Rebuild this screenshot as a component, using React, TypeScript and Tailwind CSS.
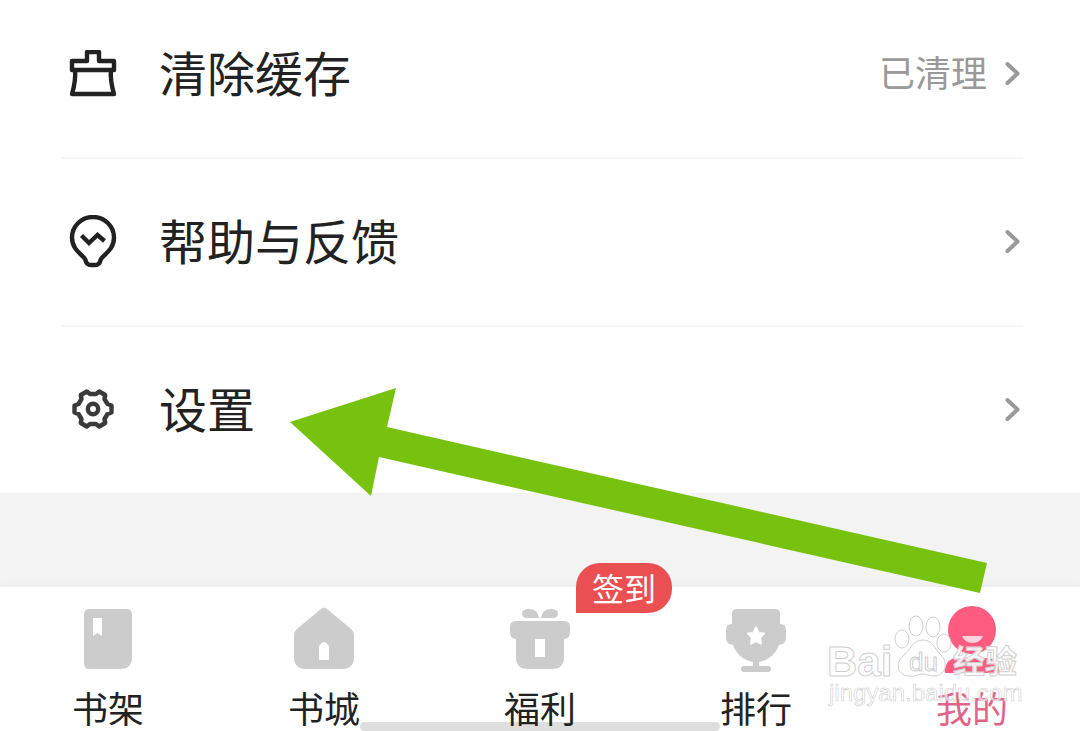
import { ReactNode } from 'react';

interface MenuItem {
  label: string;
  icon: ReactNode;
  value?: string;
}

interface TabItem {
  label: string;
  icon: ReactNode;
  badge?: string;
  active?: boolean;
}

const BrushIcon = () => (
  <svg width="48" height="48" viewBox="0 0 48 48" fill="none" stroke="#222222" strokeWidth="4.4" strokeLinejoin="round">
    <path d="M18 2H30V11H45V20H3V11H18Z" />
    <path d="M6 20C7 29 5 37 3 44H45C43 37 41 29 42 20" />
  </svg>
);

const BulbIcon = () => (
  <svg width="48" height="54" viewBox="0 0 48 54" fill="none" stroke="#222222" strokeWidth="4.4" strokeLinejoin="round">
    <path d="M16.5 45C15 40 3 36 3 22.5A21 20.5 0 0 1 45 22.5C45 36 33 40 31.5 45C31 49 29 50 26 50H22C19 50 17 49 16.5 45Z" />
    <path d="M12.5 20.5L20 28L28.5 20L35.5 26" strokeLinejoin="miter" />
  </svg>
);

const GearIcon = () => (
  <svg width="48" height="48" viewBox="0 0 48 48" fill="none" stroke="#3a3a3a" strokeWidth="4.4" strokeLinejoin="round">
    <path d="M42.5 19.5V26.5L38.5 28L35.5 33L36.2 37L30.2 40.5L27 38H21L17.8 40.5L11.8 37L12.5 33L9.5 28L5.5 26.5V19.5L9.5 18L12.5 13L11.8 9L17.8 5.5L21 8H27L30.2 5.5L36.2 9L35.5 13L38.5 18Z" />
    <circle cx="24" cy="23" r="5.2" />
  </svg>
);

const ChevronIcon = () => (
  <svg width="16" height="24" viewBox="0 0 16 24" className="overflow-visible" fill="none" stroke="#999999" strokeWidth="4" strokeLinecap="round" strokeLinejoin="round">
    <path d="M4.5 2L14.5 11.5L4.5 21" />
  </svg>
);

const ShelfIcon = () => (
  <svg width="60" height="60" viewBox="0 0 60 60">
    <path d="M11 0H49Q54 0 54 6V48Q54 60 42 60H11Q6 60 6 54V6Q6 0 11 0Z" fill="#cccccc" />
    <path d="M15 9H24V27L19.5 24L15 27Z" fill="#ffffff" />
  </svg>
);

const HouseIcon = () => (
  <svg width="60" height="60" viewBox="0 0 60 60" className="overflow-visible">
    <path d="M27 0Q30 -2.500 33 0L57 20Q60 22.500 60 27V48Q60 60 48 60H12Q0 60 0 48V27Q0 22.500 3 20Z" fill="#cccccc" />
    <path d="M25 51V37.500Q30 28.500 35 37.500V51Z" fill="#ffffff" />
  </svg>
);

const GiftIcon = () => (
  <svg width="60" height="60" viewBox="0 0 60 60" fill="#cccccc">
    <path d="M29 9Q28 0 19 0Q12 0 12 4.500Q12 9 18 9ZM31 9Q32 0 41 0Q48 0 48 4.500Q48 9 42 9Z" />
    <path d="M6 12H54Q60 12 60 18V23Q60 30 54 30V48Q54 60 42 60H18Q6 60 6 48V30Q0 30 0 23V18Q0 12 6 12Z" />
    <path d="M25 30H35V48H25Z" fill="#ffffff" />
  </svg>
);

const TrophyIcon = () => (
  <svg width="60" height="60" viewBox="0 0 60 60" className="overflow-visible" fill="#cccccc">
    <path d="M11 0H49Q54 0 54 5V15Q60 15 60 21V29Q60 35 53 36Q48 50 33 53V57H42Q45 57 45 60Q45 63 42 63H18Q15 63 15 60Q15 57 18 57H27V53Q12 50 7 36Q0 35 0 29V21Q0 15 6 15V5Q6 0 11 0Z" />
    <path
      d="M30 18.500L32.500 24L38 24.500L34 28.500L35 34.500L30 32L25 34.500L26 28.500L22 24.500L27.500 24Z"
      fill="#ffffff"
      stroke="#ffffff"
      strokeWidth="2"
      strokeLinejoin="round"
    />
  </svg>
);

const ProfileIcon = () => (
  <svg width="60" height="60" viewBox="0 0 60 60" className="overflow-visible">
    <path d="M4 64Q2 64 3 60Q5 49 15 49H45Q55 49 57 60Q58 64 56 64Z" fill="#fd5b80" />
    <circle cx="30" cy="21" r="24" fill="#fd5b80" />
    <path d="M20 27H41Q38 34 30.500 34Q23 34 20 27Z" fill="#ffd3dd" />
  </svg>
);

const menuItems: MenuItem[] = [
  { label: '清除缓存', icon: <BrushIcon />, value: '已清理' },
  { label: '帮助与反馈', icon: <BulbIcon /> },
  { label: '设置', icon: <GearIcon /> },
];

const tabs: TabItem[] = [
  { label: '书架', icon: <ShelfIcon /> },
  { label: '书城', icon: <HouseIcon /> },
  { label: '福利', icon: <GiftIcon />, badge: '签到' },
  { label: '排行', icon: <TrophyIcon /> },
  { label: '我的', icon: <ProfileIcon />, active: true },
];

const MenuRow = ({ item }: { item: MenuItem }) => (
  <li className="border-b-2 border-[#f5f5f5] last:border-b-0">
    <button type="button" className="flex h-[166px] w-full items-center gap-[42px] pr-1 pl-2 text-left">
      {item.icon}
      <span className="flex-1 pb-1.5 text-5xl text-[#222222]">{item.label}</span>
      <span className="flex items-center gap-4 text-4xl text-[#999999]">
        {item.value && <span className="pb-1.5">{item.value}</span>}
        <ChevronIcon />
      </span>
    </button>
  </li>
);

const TabButton = ({ tab }: { tab: TabItem }) => (
  <button type="button" className="relative flex flex-col items-center gap-5 pt-[22px] pb-1.5">
    {tab.icon}
    <span className={`text-4xl leading-9 ${tab.active ? 'text-[#df6487]' : 'text-[#222222]'}`}>
      {tab.label}
    </span>
    {tab.badge && (
      <span className="absolute -top-6 left-1/2 ml-9 rounded-3xl rounded-bl-none bg-[#ea5051] px-4 pb-0.5 text-[32px] leading-[48px] whitespace-nowrap text-white">
        {tab.badge}
      </span>
    )}
  </button>
);

const GreenArrow = () => (
  <svg className="pointer-events-none absolute top-[388px] left-[290px]" width="698" height="208" viewBox="0 0 698 208">
    <path d="M0 34L106 0L97 39L697 175L690 205L89 69L81 108Z" fill="#77c20e" />
  </svg>
);

const Watermark = () => (
  <svg
    className="pointer-events-none absolute right-[54px] bottom-[19px]"
    width="200"
    height="100"
    viewBox="0 0 200 100"
    fill="#ffffff"
    fillOpacity="0.65"
    stroke="#cfcfcf"
    strokeWidth="1"
    fontFamily="Liberation Sans, Noto Sans CJK SC, sans-serif"
  >
    <text x="1" y="64" fontSize="42" fontWeight="700">Bai</text>
    <ellipse cx="76" cy="27" rx="7" ry="9" />
    <ellipse cx="90" cy="14" rx="7" ry="10" />
    <ellipse cx="107" cy="15" rx="7" ry="10" />
    <ellipse cx="118" cy="31" rx="7" ry="9" />
    <path d="M97 28C107 28 109 38 115 43C123 51 119 64 108 64C103 64 101 62 97 62C92 62 90 65 83 64C71 64 69 51 77 44C84 39 86 28 97 28Z" />
    <text x="83" y="59" fontSize="26">du</text>
    <text x="127" y="61" fontSize="32" fontWeight="700" fillOpacity="0.9">经验</text>
    <text x="3" y="89" fontSize="24" strokeWidth="0.6">jingyan.baidu.com</text>
  </svg>
);

export default function App() {
  return (
    <div className="relative flex min-h-screen flex-col overflow-hidden bg-[#f3f3f3] font-['Noto_Sans_CJK_SC',sans-serif]">
      <main className="bg-white pr-[57px] pl-[61px]">
        {/* list is scrolled a little past its top edge */}
        <ul className="-mt-[9px]">
          {menuItems.map((item) => (
            <MenuRow key={item.label} item={item} />
          ))}
        </ul>
      </main>

      <nav className="relative mt-auto bg-white shadow-[0_0_10px_rgba(0,0,0,0.06)]">
        <div className="absolute bottom-0 left-1/2 h-[9px] w-1/3 -translate-x-1/2 rounded-l-full rounded-r-full bg-[#dedede]" />
        <div className="grid grid-cols-5">
          {tabs.map((tab) => (
            <TabButton key={tab.label} tab={tab} />
          ))}
        </div>
      </nav>

      <GreenArrow />
      <Watermark />
    </div>
  );
}
